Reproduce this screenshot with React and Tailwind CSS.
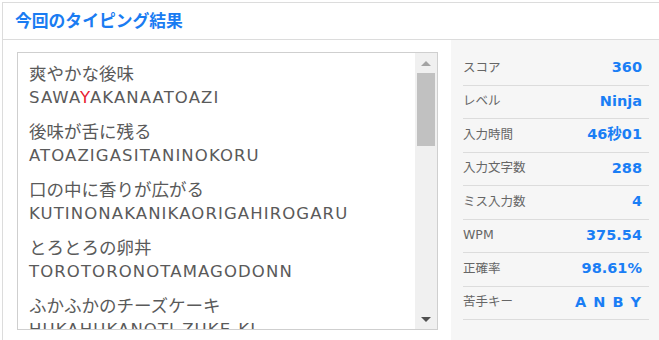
const items = [
  { jp: "爽やかな後味", ro: ["SAWA", "Y", "AKANAATOAZI"] },
  { jp: "後味が舌に残る", ro: ["ATOAZIGASITANINOKORU"] },
  { jp: "口の中に香りが広がる", ro: ["KUTINONAKANIKAORIGAHIROGARU"] },
  { jp: "とろとろの卵丼", ro: ["TOROTORONOTAMAGODONN"] },
  { jp: "ふかふかのチーズケーキ", ro: ["HUKAHUKANOTI-ZUKE-KI"] },
]

const stats = [
  { label: "スコア", value: "360" },
  { label: "レベル", value: "Ninja" },
  { label: "入力時間", value: "46秒01" },
  { label: "入力文字数", value: "288" },
  { label: "ミス入力数", value: "4" },
  { label: "WPM", value: "375.54" },
  { label: "正確率", value: "98.61%" },
  { label: "苦手キー", value: "A N B Y", wide: true },
]

const font = { fontFamily: '"DejaVu Sans", "Noto Sans CJK JP", sans-serif' }

const App = () => {
  return (
    <div className="w-[659px] h-[340px] overflow-hidden bg-white" style={font}>
      <div className="ml-[2px] mt-[2px] w-[700px] h-[360px] border-l border-t border-[#dcdcdc] flex flex-col">
        {/* Header */}
        <div className="h-[37px] border-b border-[#dcdcdc] flex items-center pl-[12px]">
          <h1 className="text-[16.8px] font-bold text-[#1a7cf2] leading-none pt-[1px]">今回のタイピング結果</h1>
        </div>

        <div className="flex flex-1">
          {/* Word list */}
          <div className="w-[448px] pl-[14px] pr-[13px] pt-[12px]">
            <div className="h-[278px] border border-[#cfcfcf] flex overflow-hidden">
              <div className="flex-1 pl-[11px] pt-[10px] overflow-hidden text-[#5a5a5a]">
                {items.map((it, i) => (
                  <div key={i} className="mb-[12px]">
                    <div className="text-[17.5px] leading-[23px]">{it.jp}</div>
                    <div className="text-[16.5px] leading-[23px] tracking-[1.1px] whitespace-nowrap">
                      {it.ro.map((r, j) => (
                        <span key={j} className={r === "Y" && j === 1 ? "text-[#e8202f]" : ""}>{r}</span>
                      ))}
                    </div>
                  </div>
                ))}
              </div>
              {/* Scrollbar */}
              <div className="w-[22px] bg-[#f0f0f0] flex flex-col items-center">
                <div className="h-[20px] flex items-center justify-center">
                  <div className="w-0 h-0 border-l-[5px] border-r-[5px] border-b-[5px] border-l-transparent border-r-transparent border-b-[#a3a3a3]" />
                </div>
                <div className="w-[18px] h-[73px] bg-[#c1c1c1]" />
                <div className="flex-1" />
                <div className="h-[20px] flex items-center justify-center">
                  <div className="w-0 h-0 border-l-[5px] border-r-[5px] border-t-[5px] border-l-transparent border-r-transparent border-t-[#505050]" />
                </div>
              </div>
            </div>
          </div>

          {/* Stats */}
          <div className="w-[210px] bg-[#f6f6f6] pl-[12px] pt-[12px]">
            <div className="w-[186px]">
              {stats.map((s, i) => (
                <div key={i} className="h-[33.5px] border-b border-[#dcdcdc] flex items-center justify-between pr-[7px]">
                  <span className="text-[12.5px] text-[#666]">{s.label}</span>
                  <span className={"text-[14.5px] font-bold text-[#1a7ef5] " + (s.wide ? "tracking-[1px]" : "")}>{s.value}</span>
                </div>
              ))}
            </div>
          </div>
        </div>
      </div>
    </div>
  )
}

export default App
